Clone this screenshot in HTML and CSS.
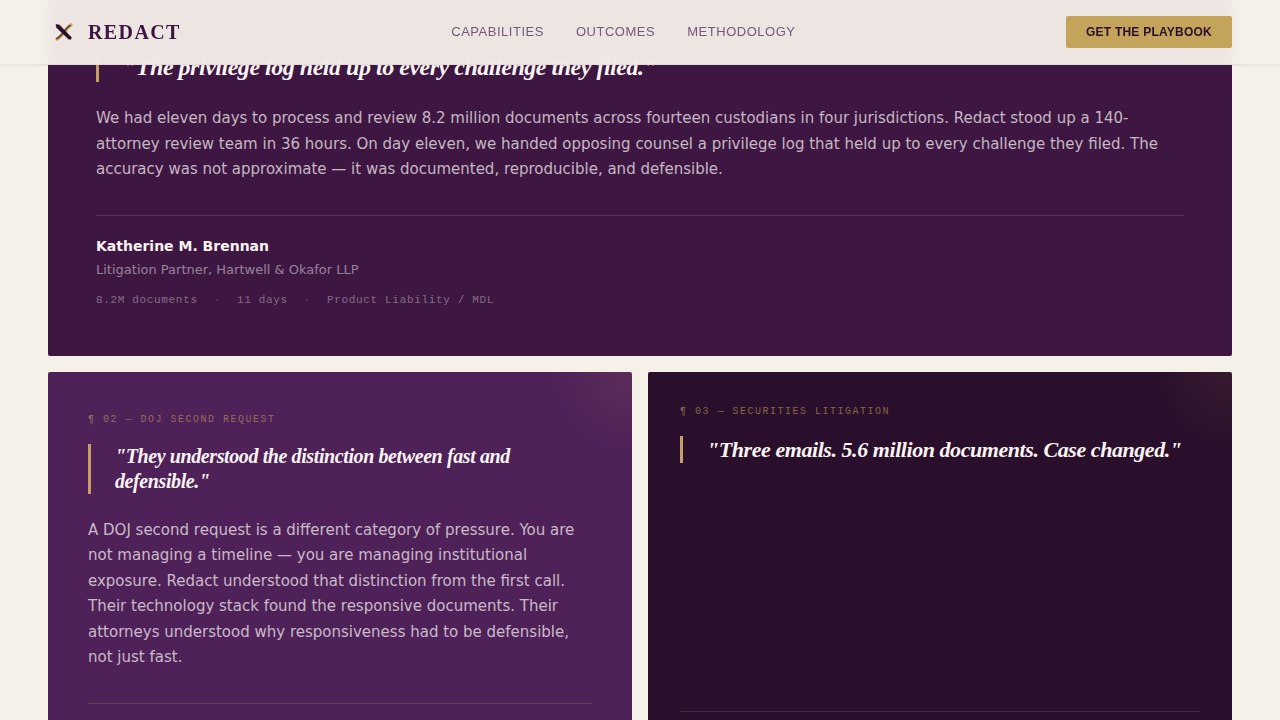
FILE: index.html
```html
<!DOCTYPE html>
<html lang="en">
<head>
<meta charset="utf-8">
<meta name="viewport" content="width=device-width, initial-scale=1">
<title>Redact</title>
<link rel="stylesheet" href="styles.css">
</head>
<body>
<header class="site-header">
  <a class="brand" href="#">
    <svg class="brand-mark" viewBox="0 0 32 32" aria-hidden="true">
      <path d="M23 9C19 10.500 15.500 19.500 9 23" fill="none" stroke="#c4a35a" stroke-width="3.200" stroke-linecap="round"/>
      <path d="M22 9.500C18 11.500 15 18.500 9 22.500" fill="none" stroke="#5a4636" stroke-width="1.600" stroke-linecap="round"/>
      <path d="M8 8.500L11.500 9L23.500 21.500L22.500 23.500L20.500 23L8.500 11.500Z" fill="#2a0f2b" stroke="#2a0f2b" stroke-width="0.500" stroke-linejoin="round"/>
    </svg>
    <span>REDACT</span>
  </a>
  <nav class="nav" aria-label="Main">
    <a href="#">CAPABILITIES</a>
    <a href="#">OUTCOMES</a>
    <a href="#">METHODOLOGY</a>
  </nav>
  <button class="cta" type="button">GET THE PLAYBOOK</button>
</header>
<main class="cases">
  <article class="case case-lead">
    <h2 class="quote">"The privilege log held up to every challenge they filed."</h2>
    <p class="story">We had eleven days to process and review 8.2 million documents across fourteen custodians in four jurisdictions. Redact stood up a 140-attorney review team in 36 hours. On day eleven, we handed opposing counsel a privilege log that held up to every challenge they filed. The accuracy was not approximate — it was documented, reproducible, and defensible.</p>
    <footer class="source">
      <p class="name">Katherine M. Brennan</p>
      <p class="role">Litigation Partner, Hartwell &amp; Okafor LLP</p>
      <p class="facts"><span>8.2M documents</span><span class="dot">·</span><span>11 days</span><span class="dot">·</span><span>Product Liability / MDL</span></p>
    </footer>
  </article>
  <article class="case case-second">
    <p class="label">¶ 02 — DOJ SECOND REQUEST</p>
    <h2 class="quote">"They understood the distinction between fast and defensible."</h2>
    <p class="story">A DOJ second request is a different category of pressure. You are not managing a timeline — you are managing institutional exposure. Redact understood that distinction from the first call. Their technology stack found the responsive documents. Their attorneys understood why responsiveness had to be defensible, not just fast.</p>
    <footer class="source"></footer>
  </article>
  <article class="case case-third">
    <p class="label">¶ 03 — SECURITIES LITIGATION</p>
    <h2 class="quote">"Three emails. 5.6 million documents. Case changed."</h2>
    <footer class="source"></footer>
  </article>
</main>
</body>
</html>
```
FILE: styles.css
```css
* {
  box-sizing: border-box;
}

body {
  margin: 0;
  background: #f5f0e8;
  color: #f9f4f2;
  font-family: "DejaVu Sans", sans-serif;
}

h2, p {
  margin: 0;
}

.site-header {
  position: fixed;
  inset: 0 0 auto;
  z-index: 1;
  display: flex;
  align-items: center;
  justify-content: space-between;
  padding: 16px 48px;
  border-bottom: 1px solid rgba(60, 22, 66, 0.06);
  background: rgba(245, 240, 234, 0.95);
  box-shadow: 0 1px 2px rgba(60, 22, 66, 0.06);
  backdrop-filter: blur(8px);
}

.brand {
  display: flex;
  align-items: center;
  gap: 8px;
  color: #3c1642;
  font: bold 20px/24px "Liberation Serif", serif;
  letter-spacing: 0.07em;
  text-decoration: none;
}

.brand-mark {
  width: 32px;
  height: 32px;
}

.nav {
  display: flex;
  gap: 32px;
}

.nav a {
  color: #755a78;
  font: 13px/20px "Liberation Sans", sans-serif;
  letter-spacing: 0.04em;
  text-decoration: none;
}

.cta {
  height: 32px;
  padding: 0 20px;
  border: 0;
  border-radius: 2px;
  background: #c4a35a;
  color: #2a0f2b;
  font: bold 12px/16px "Liberation Sans", sans-serif;
  letter-spacing: 0.02em;
}

.cases {
  display: grid;
  grid-template-columns: 1fr 1fr;
  gap: 16px;
  padding: 0 48px 48px;
}

.case {
  display: flex;
  flex-direction: column;
  border-radius: 2px;
}

.case-lead {
  grid-column: 1 / -1;
  padding: 52px 48px 48px;
  background: #3d1642;
}

.case-second {
  padding: 40px;
  background: radial-gradient(circle at top right, rgba(196, 130, 90, 0.12), transparent 80px), #4e2158;
}

.case-third {
  padding: 32px;
  background: radial-gradient(circle at top right, rgba(196, 163, 90, 0.08), transparent 80px), #2a0f2c;
}

.label {
  margin-bottom: 16px;
  color: rgba(196, 163, 90, 0.6);
  font: 10px/16px "Liberation Mono", monospace;
  letter-spacing: 0.15em;
}

.quote {
  margin-bottom: 24px;
  padding-left: 24px;
  border-left: 3px solid #c4a064;
  font: italic bold 20px/1.25 "Liberation Serif", serif;
  letter-spacing: -0.02em;
}

.case-lead .quote {
  font-size: 24px;
}

.case-third .quote {
  font-size: 22px;
}

.story {
  margin-bottom: 32px;
  color: rgba(245, 236, 238, 0.75);
  font-size: 15px;
  line-height: 1.7;
}

.source {
  min-height: 93px;
  margin-top: auto;
  padding-top: 20px;
  border-top: 1px solid rgba(196, 163, 90, 0.2);
}

.name {
  margin-bottom: 4px;
  font-size: 14px;
  font-weight: bold;
  line-height: 20px;
}

.role {
  margin-bottom: 12px;
  color: rgba(245, 236, 240, 0.5);
  font-size: 13px;
  line-height: 20px;
}

.facts {
  display: flex;
  gap: 16px;
  color: rgba(245, 236, 240, 0.4);
  font: 11px/16px "Liberation Mono", monospace;
  letter-spacing: 0.06em;
}

.dot {
  color: rgba(196, 163, 90, 0.4);
}
```
